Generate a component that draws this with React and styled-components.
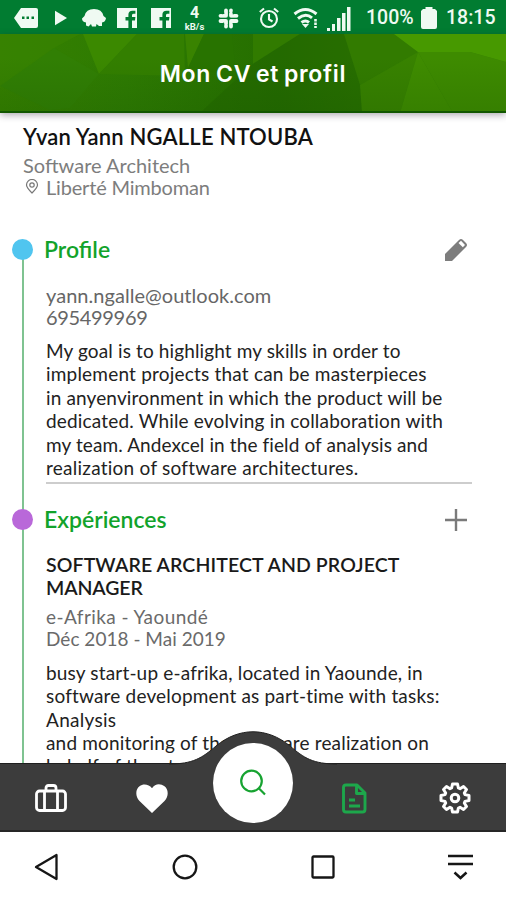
import React from "react";
import styled, { createGlobalStyle } from "styled-components";

const GlobalStyle = createGlobalStyle`
  * { box-sizing: border-box; }
  body { margin: 0; background: #fff; font-family: Lato, "Open Sans", sans-serif; }
  svg { display: block; flex: none; }
`;

const Screen = styled.main`
  width: 506px;
  height: 900px;
  display: flex;
  flex-direction: column;
  overflow: hidden;
  background: #fff;
`;

const StatusBar = styled.div`
  height: 34px;
  flex: none;
  display: flex;
  align-items: center;
  padding: 2px 0 0 14px;
  background: #017c31;
  color: #effaf2;
  font-family: Roboto, sans-serif;
`;

const StatusSlot = styled.div`
  width: ${(p) => p.$w}px;
  flex: none;
`;

const StatusText = styled.span`
  display: block;
  font-size: 19.5px;
  font-weight: 500;
  line-height: 24px;
  letter-spacing: ${(p) => p.$track}px;
  white-space: nowrap;
`;

const Speed = styled.div`
  width: 21px;
  display: flex;
  flex-direction: column;
  align-items: center;
  font-weight: 700;
`;

const SpeedValue = styled.span`
  font-size: 16px;
  line-height: 16px;
  height: 16px;
`;

const SpeedUnit = styled.span`
  font-size: 9.5px;
  line-height: 11px;
  height: 11px;
`;

const Header = styled.header`
  height: 79px;
  flex: none;
  display: grid;
  box-shadow: 0 2px 7px rgba(40, 30, 50, 0.38);
  z-index: 1;
  & > * { grid-area: 1 / 1; }
`;

const Title = styled.h1`
  margin: 0;
  align-self: center;
  justify-self: center;
  color: #fff;
  font: 600 23px/30px Inter, sans-serif;
  letter-spacing: 0.7px;
  word-spacing: -1.6px;
  white-space: nowrap;
`;

const Content = styled.section`
  height: 650px;
  flex: none;
  overflow: hidden;
`;

const Identity = styled.div`
  height: 126px;
  padding: 11px 0 0 23px;
`;

const Line = styled.div`
  display: flex;
  align-items: center;
  height: ${(p) => p.$h || 23.4}px;
  line-height: ${(p) => p.$h || 23.4}px;
  font-size: ${(p) => p.$size || 19}px;
  font-weight: ${(p) => p.$weight || 400};
  letter-spacing: ${(p) => p.$track || 0}px;
  color: ${(p) => p.$color || "#222"};
  white-space: pre;
`;

const PinSlot = styled.span`
  width: 23px;
  padding-left: 2px;
`;

const Entry = styled.article`
  display: grid;
  grid-template-columns: 46px 426px;
  height: ${(p) => p.$h}px;
`;

const Rail = styled.div`
  display: flex;
  flex-direction: column;
  align-items: center;
  width: 45px;
  background: linear-gradient(#7fc391, #7fc391) center ${(p) => p.$from}px / 2px 100% no-repeat;
`;

const Dot = styled.i`
  width: 21px;
  height: 21px;
  border-radius: 50%;
  background: ${(p) => p.$color};
`;

const SectionHead = styled.div`
  display: flex;
  align-items: center;
  justify-content: space-between;
  height: 22px;
  padding-right: 4px;
  margin: 0 0 ${(p) => p.$gap}px -2px;
`;

const Block = styled.div`
  margin-top: ${(p) => p.$top || 0}px;
`;

const Divider = styled.hr`
  height: 2px;
  margin: 3px 0 0;
  border: 0;
  background: #cdcdcd;
`;

const TabBar = styled.nav`
  position: relative;
  z-index: 2;
  height: 69px;
  flex: none;
  display: grid;
  grid-template-columns: repeat(5, 1fr);
  grid-template-rows: 54px;
  align-items: center;
  justify-items: center;
  padding-top: 7px;
  background: #3c3c3c;
  border-top: 1px solid #1f1f1f;
  border-bottom: 2px solid #262626;
`;

const Hump = styled.svg`
  position: absolute;
  left: 169px;
  top: -33px;
`;

const SearchButton = styled.button`
  position: relative;
  top: -15px;
  width: 80px;
  height: 80px;
  padding: 0 0 0 1px;
  display: grid;
  place-items: center;
  border: 0;
  border-radius: 50%;
  background: #fff;
`;

const SystemBar = styled.footer`
  height: 68px;
  flex: none;
  display: flex;
  align-items: center;
  justify-content: space-between;
  padding: 2px 32px 0 34px;
  background: #fff;
`;

const profileText = [
  ["My goal is to highlight my skills in order to", 0.13],
  ["implement projects that can be masterpieces", 0.2],
  ["in anyenvironment in which the product will be", 0.14],
  ["dedicated. While evolving in collaboration with", 0.17],
  ["my team. Andexcel in the field of analysis and", 0.11],
  ["realization of software architectures.", 0.25],
];

const experienceText = [
  ["busy start-up e-afrika, located in Yaounde, in", 0.17],
  ["software development as part-time with tasks:", 0.18],
  ["Analysis", 0.3],
  ["and monitoring of the software realization on", 0.17],
  ["behalf of the structure", 0.2],
];

const Facebook = () => (
  <svg width="20" height="20" viewBox="0 0 20 20">
    <path fill="#effaf2" d="M0 0H20V20H15V12.5H18L18.4 9H15V7.2Q15 5.8 16.8 5.8H18.4V2.8H15.5Q11.4 2.8 11.4 6.8V9H8.5V12.5H11.4V20H0Z" />
  </svg>
);

export default function App() {
  return (
    <Screen>
      <GlobalStyle />
      <StatusBar>
        <StatusSlot $w={37}>
          <svg width="25" height="20" viewBox="0 0 25 20" fill="#effaf2">
            <path fillRule="evenodd" d="M7 0H22Q24 0 24 2V18Q24 20 22 20H7L0 10ZM8 8.500V11H10.500V8.500ZM12.500 8.500V11H15V8.500ZM17.500 8.500V11H20V8.500Z" />
          </svg>
        </StatusSlot>
        <StatusSlot $w={31}>
          <svg width="19" height="16" viewBox="0 0 19 16"><path d="M4 .8 16 8 4 15.200Z" fill="#effaf2" /></svg>
        </StatusSlot>
        <StatusSlot $w={35}>
          <svg width="24" height="20" viewBox="0 0 24 20">
            <path fill="#effaf2" d="M2.500 8Q4 1 12 1 20 1 21.500 8L24 10Q23.500 14 20 14.500L20 18H17L14.500 16 14 18.500H10L9 16 6.500 18.500 4 17.500V14.500Q0 14 0 10.500Z" />
          </svg>
        </StatusSlot>
        <StatusSlot $w={34}><Facebook /></StatusSlot>
        <StatusSlot $w={33}><Facebook /></StatusSlot>
        <StatusSlot $w={34}>
          <Speed><SpeedValue>4</SpeedValue><SpeedUnit>kB/s</SpeedUnit></Speed>
        </StatusSlot>
        <StatusSlot $w={41}>
          <svg width="21" height="21" viewBox="0 0 21 21" stroke="#effaf2" strokeWidth="3.800" strokeLinecap="round" fill="none">
            <path d="M8 2.500V7.800M2.500 7.800H3.500M13 7.800H18.500M13 2.500V3.500M2.500 13H8M8 17.500V18.500M13 13V18.500M17.500 13H18.500M5.500 7.800H8M13 5V7.800M13 13H16M8 13V16" />
            <path d="M10.500 0V21M0 10.400H21" stroke="#017c31" strokeWidth="1" />
            <path d="M3 5.200H6M15.200 3V6M15 15.600H18M5.600 15V18" stroke="#017c31" strokeWidth=".9" />
          </svg>
        </StatusSlot>
        <StatusSlot $w={34}>
          <svg width="22" height="22" viewBox="0 0 22 22" fill="none" stroke="#effaf2" strokeWidth="2.1">
            <circle cx="10" cy="12" r="8" /><path d="M10 7V12.500L13.500 14.500M.8 5 5 1.500M15 1.500 19.200 5" />
          </svg>
        </StatusSlot>
        <StatusSlot $w={34}>
          <svg width="26" height="22" viewBox="0 0 26 22" fill="none" stroke="#effaf2" strokeWidth="3">
            <path d="M1.500 7Q12.500-2 23.500 7M5 11.500Q12.500 5.500 19 10.800M8.500 15.500Q12.500 12.500 16 15.500" />
            <path d="M9 17H16L12.500 21Z" fill="#effaf2" stroke="none" />
            <path d="M22.500 12V21" strokeDasharray="2.500 1" strokeWidth="2.600" />
          </svg>
        </StatusSlot>
        <StatusSlot $w={39}>
          <svg width="24" height="25" viewBox="0 0 24 25" fill="#effaf2">
            <path d="M0 22H3V25H0ZM5 18H8V25H5ZM10 12H13.500V25H10ZM15 7H18.500V25H15ZM20 1H23.500V25H20Z" />
          </svg>
        </StatusSlot>
        <StatusSlot $w={55}><StatusText $track={0}>100%</StatusText></StatusSlot>
        <StatusSlot $w={25}>
          <svg width="16" height="22" viewBox="0 0 16 22" fill="#effaf2"><path d="M4.500 0H11.500V2H14L16 4V20Q16 22 14 22H2Q0 22 0 20V4L2 2H4.500Z" /></svg>
        </StatusSlot>
        <StatusText $track={0}>18:15</StatusText>
      </StatusBar>

      <Header>
        <svg width="506" height="79" viewBox="0 0 506 79">
          <defs>
            <linearGradient id="base" x1="0" x2="1">
              <stop offset="0" stopColor="#358000" /><stop offset=".25" stopColor="#2e7b02" />
              <stop offset=".55" stopColor="#256e00" /><stop offset="1" stopColor="#3c8600" />
            </linearGradient>
            <linearGradient id="shade" x1="0" y1="0" x2="0" y2="1">
              <stop offset=".3" stopColor="#154f00" stopOpacity="0" /><stop offset="1" stopColor="#154f00" stopOpacity=".2" />
            </linearGradient>
          </defs>
          <rect width="506" height="79" fill="url(#base)" />
          <path d="M0 0H80L54 14 0 54Z" fill="#398401" opacity=".6" />
          <path d="M54 14 99 40 70 74 50 76 0 52Z" fill="#317f04" />
          <path d="M83 0H137L99 40Z" fill="#3b8900" />
          <path d="M99 40 137 0H184L185 42Z" fill="#337f00" />
          <path d="M185 0H204L188 34Z" fill="#398300" />
          <path d="M204 0H232L236 42 188 34Z" fill="#287300" />
          <path d="M253 0H300L253 30Z" fill="#317b00" />
          <path d="M300 0H344L362 52V79H200L253 30Z" fill="#216600" opacity=".5" />
          <path d="M344 0H394L418 18 360 51Z" fill="#327b00" />
          <path d="M394 0H506V28L470 18H418Z" fill="#479900" />
          <path d="M418 18 360 51 362 79H400Z" fill="#388200" />
          <path d="M418 18 453 79H400Z" fill="#3f8c00" />
          <path d="M418 18H470L506 28V79H453Z" fill="#3e8b00" />
          <rect width="506" height="79" fill="url(#shade)" />
          <rect y="77" width="506" height="2" fill="#125700" />
        </svg>
        <Title>Mon CV et profil</Title>
      </Header>

      <Content>
        <Identity>
          <Line $h={25} $size={22} $weight={600} $track={0.17} $color="#111">Yvan Yann NGALLE NTOUBA</Line>
          <Block $top={5}>
            <Line $h={22} $size={20} $color="#7d7d7d">Software Architech</Line>
            <Line $h={22} $size={20} $track={-0.18} $color="#7d7d7d">
              <PinSlot>
                <svg width="14" height="16" viewBox="0 0 14 16" fill="none" stroke="#777" strokeWidth="1.2">
                  <path d="M7 14Q1.500 8.500 1.500 6A5.500 5.500 0 0 1 12.500 6Q12.500 8.500 7 14Z" /><circle cx="7" cy="6" r="2.200" />
                </svg>
              </PinSlot>
              Liberté Mimboman
            </Line>
          </Block>
        </Identity>

        <Entry $h={270}>
          <Rail $from={10}><Dot $color="#50c5ef" /></Rail>
          <div>
            <SectionHead $gap={23}>
              <Line $size={23} $weight={600} $color="#12a32b">Profile</Line>
              <svg width="24" height="24" viewBox="0 0 24 24">
                <path d="M1 23V16L15 2Q17 0 19 2L22 5Q24 7 22 9L8 23Z" fill="#7d7d7d" />
                <path d="M14.500 5 17 2.800 21 7 18.800 9.200Z" fill="#fff" />
              </svg>
            </SectionHead>
            <Line $h={22} $size={20} $track={0.04} $color="#666">yann.ngalle@outlook.com</Line>
            <Line $h={22} $size={20} $track={-0.33} $color="#666">695499969</Line>
            <Block $top={11}>
              {profileText.map(([t, track]) => <Line key={t} $track={track}>{t}</Line>)}
            </Block>
            <Divider />
          </div>
        </Entry>

        <Entry $h={260}>
          <Rail $from={0}><Dot $color="#b968d9" /></Rail>
          <div>
            <SectionHead $gap={22}>
              <Line $size={23} $weight={600} $color="#12a32b">Expériences</Line>
              <svg width="24" height="24" viewBox="0 0 24 24" stroke="#7a7a7a" strokeWidth="2.4"><path d="M1 12H23M12 1V23" /></svg>
            </SectionHead>
            <Line $size={19.5} $weight={600} $track={0.1} $color="#1a1a1a">SOFTWARE ARCHITECT AND PROJECT</Line>
            <Line $size={19.5} $weight={600} $track={-0.1} $color="#1a1a1a">MANAGER</Line>
            <Block $top={6}>
              <Line $h={22} $track={0.42} $color="#6a6a6a">e-Afrika - Yaoundé</Line>
              <Line $h={22} $track={0.02} $color="#6a6a6a">Déc 2018 - Mai 2019</Line>
            </Block>
            <Block $top={11}>
              {experienceText.map(([t, track]) => <Line key={t} $track={track}>{t}</Line>)}
            </Block>
          </div>
        </Entry>
      </Content>

      <TabBar>
        <Hump width="168" height="36" viewBox="0 0 168 36">
          <path d="M0 33C24 33 33 27 47 15 70-4 98-4 121 15 135 27 144 33 168 33V36H0Z" fill="#3c3c3c" />
          <path d="M0 33C24 33 33 27 47 15 70-4 98-4 121 15 135 27 144 33 168 33" fill="none" stroke="#222" />
        </Hump>
        <svg width="32" height="28" viewBox="0 0 32 28" fill="none" stroke="#fff" strokeWidth="2.8">
          <rect x="1.500" y="7" width="29" height="19.500" rx="3" />
          <path d="M11 7V4Q11 1.500 13.500 1.500H18.500Q21 1.500 21 4V7M9.500 7V26M22.500 7V26" />
        </svg>
        <svg width="32" height="29" viewBox="0 0 32 29"><path fill="#fff" d="M16 29 3.500 17C-1 12.500-.5 5 3.500 2.300 7.500-.8 13 .5 16 4.200 19-.5 24.500-.8 28.500 2.300 32.500 5 33 12.500 28.500 17Z" /></svg>
        <SearchButton>
          <svg width="28" height="28" viewBox="0 0 28 28" fill="none" stroke="#17a331" strokeWidth="2.200"><circle cx="12.500" cy="12" r="10.300" /><path d="M19.800 19.300 26 25.500" /></svg>
        </SearchButton>
        <svg width="25" height="31" viewBox="0 0 25 31" fill="none" stroke="#1da74b" strokeWidth="2.900" strokeLinejoin="round">
          <path d="M4 2H15L23 10V26.500Q23 29 20.500 29H4Q1.500 29 1.500 26.500V4.500Q1.500 2 4 2ZM14.500 2V10.500H23M7 17H13M7 23H18" />
        </svg>
        <svg width="32" height="32" viewBox="-16 -16 32 32" fill="none" stroke="#fff" strokeWidth="3" strokeLinejoin="round">
          <path d="M-2.500-14H2.500L3.400-10 5-9.300 8.500-11.500 11.500-8.500 9.300-5 10-3.400 14-2.500V2.500L10 3.400 9.300 5 11.500 8.500 8.500 11.500 5 9.300 3.400 10 2.500 14H-2.500L-3.400 10-5 9.300-8.500 11.500-11.500 8.500-9.300 5-10 3.400-14 2.500V-2.500L-10-3.400-9.300-5-11.500-8.500-8.500-11.500-5-9.300-3.400-10Z" />
          <circle r="3.800" />
        </svg>
      </TabBar>

      <SystemBar>
        <svg width="25" height="28" viewBox="0 0 25 28" fill="none" stroke="#161616" strokeWidth="2.300" strokeLinejoin="round"><path d="M22.500 2V26L2 14Z" /></svg>
        <svg width="26" height="26" viewBox="0 0 26 26" fill="none" stroke="#161616" strokeWidth="2.300"><circle cx="13" cy="13" r="11.300" /></svg>
        <svg width="24" height="24" viewBox="0 0 24 24" fill="none" stroke="#161616" strokeWidth="2.300"><rect x="1.500" y="1.500" width="21" height="21" rx="1" /></svg>
        <svg width="26" height="26" viewBox="0 0 26 26" fill="none" stroke="#161616" strokeWidth="2.500"><path d="M0 2H25M0 10H25M6.500 18.500 12.500 24 18.500 18.500" /></svg>
      </SystemBar>
    </Screen>
  );
}
